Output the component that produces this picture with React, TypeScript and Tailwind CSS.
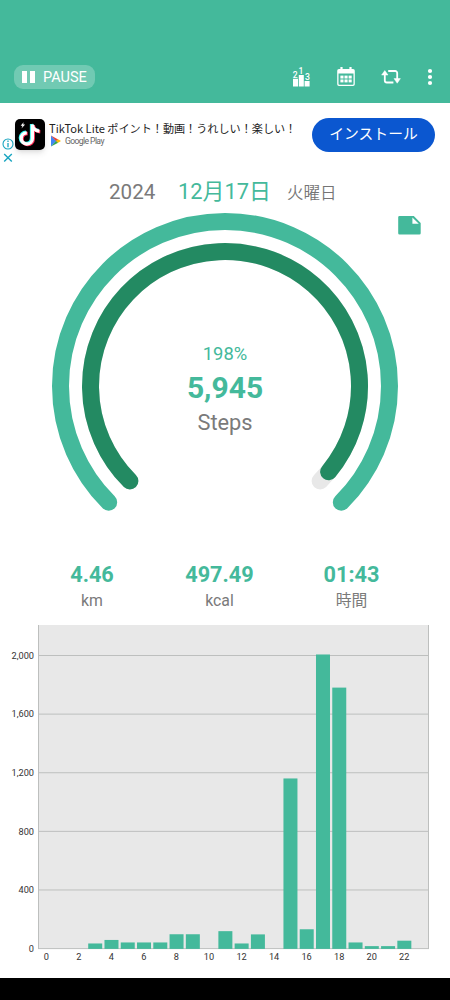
const GREEN = "#44b99b";

const hourlySteps = [
  0, 0, 0, 37, 61, 44, 44, 44, 100, 100, 0, 121, 37, 99, 0, 1163, 134, 2009, 1783, 44, 19, 19, 56, 0,
];

const stats = [
  { value: "4.46", label: "km" },
  { value: "497.49", label: "kcal" },
  { value: "01:43", label: "時間" },
];

const PodiumIcon = () => (
  <svg width="20" height="22" viewBox="0 0 20 22" fill="white" fontSize="8.6" fontWeight="500">
    <rect x="2" y="12.8" width="5" height="7.7" />
    <rect x="7.8" y="9" width="5" height="11.5" />
    <rect x="13.6" y="15" width="5" height="5.5" />
    <text x="4.2" y="11.7" textAnchor="middle">2</text>
    <text x="10" y="7.6" textAnchor="middle">1</text>
    <text x="16.4" y="13.8" textAnchor="middle">3</text>
  </svg>
);

const CalendarIcon = () => (
  <svg width="18" height="20" viewBox="0 0 18 20" fill="white">
    <path
      fillRule="evenodd"
      d="M2 2h1.4V0h2.2v2h6.8V0h2.2v2H16a1.8 1.8 0 0 1 1.8 1.8v13.4A1.8 1.8 0 0 1 16 19H2a1.8 1.8 0 0 1-1.8-1.8V3.8A1.8 1.8 0 0 1 2 2zM1.5 6.4v10.6c0 .4.3.7.7.7h13.6c.4 0 .7-.3.7-.7V6.4z"
    />
    {[8.6, 12.5].map((y) =>
      [3.4, 7.5, 11.6].map((x) => <rect key={`${x}-${y}`} x={x} y={y} width="3.1" height="2.9" />)
    )}
  </svg>
);

const RepeatIcon = () => (
  <svg width="20" height="16" viewBox="0 0 20 16">
    <path d="M3.8 4.5v7a2 2 0 0 0 2 2h6.6M7.2 2h7a2 2 0 0 1 2 2v7" fill="none" stroke="white" strokeWidth="1.8" />
    <path d="M0.6 6 3.8 1.6 7 6zM13 9.6h6.4l-3.2 4.6z" fill="white" stroke="white" strokeWidth="0.5" strokeLinejoin="round" />
  </svg>
);

const MoreIcon = () => (
  <svg width="6" height="18" viewBox="0 0 6 18" fill="white">
    <circle cx="3" cy="3" r="2.1" />
    <circle cx="3" cy="9" r="2.1" />
    <circle cx="3" cy="15" r="2.1" />
  </svg>
);

const TikTokIcon = () => (
  <svg width="30" height="31" viewBox="0 0 30 31" className="rounded-[5px] shadow-md">
    <rect width="30" height="31" fill="black" />
    {[
      { color: "#25f4ee", dx: -0.9, dy: -0.6 },
      { color: "#fe2c55", dx: 0.9, dy: 0.7 },
      { color: "#ffffff", dx: 0, dy: 0 },
    ].map((layer) => (
      <path
        key={layer.color}
        transform={`translate(${layer.dx} ${layer.dy})`}
        d="M17.4 5.6v13.8a5.6 5.6 0 1 1-5.6-5.6M17.4 5.6c.4 3.6 3 6.2 7 6.5"
        fill="none"
        stroke={layer.color}
        strokeWidth="3.3"
      />
    ))}
    <path d="M8.6 3.2 5.6 6.8h1.9l-1 2.8 3.6-4.1H8.2z" fill="white" />
  </svg>
);

const PlayLogo = () => (
  <svg width="10" height="12" viewBox="0 0 10 12">
    <path d="M0 .6v10.8L5.4 6z" fill="#4285f4" />
    <path d="M0 .6 7.2 4.4 5.2 6.2z" fill="#ea4335" />
    <path d="M0 11.4 7.2 7.7 5.2 5.8z" fill="#34a853" />
    <path d="M7 4.3 10 6 7 7.8 5.1 6z" fill="#fbbc04" />
  </svg>
);

const AdMarks = () => (
  <svg width="12" height="26" viewBox="0 0 12 26" fill="none" stroke="#18a5c0" strokeWidth="1.1">
    <circle cx="6" cy="6" r="5" />
    <path d="M6 5v4.2M6 2.6v1.3" strokeWidth="1.3" />
    <path d="M2.2 16l7.6 7.6M9.8 16l-7.6 7.6" strokeWidth="1.4" />
  </svg>
);

const Header = () => (
  <header className="flex h-[102.5px] items-end justify-between bg-[#44b99b] pl-[14px] pr-[17px]">
    <button className="mb-[14px] flex h-6 w-[81px] items-center gap-2 rounded-[9px] bg-[#71cab3] pl-2 text-[14.5px] text-white">
      <span className="flex gap-[3px]">
        <span className="h-3 w-[5px] bg-white" />
        <span className="h-3 w-[5px] bg-white" />
      </span>
      <span className="pt-[3px]">PAUSE</span>
    </button>
    <div className="mb-[14.5px] flex h-[22px] items-center">
      <PodiumIcon />
      <div className="ml-[26px]"><CalendarIcon /></div>
      <div className="ml-[26px]"><RepeatIcon /></div>
      <div className="ml-[26px]"><MoreIcon /></div>
    </div>
  </header>
);

const AdBanner = () => (
  <section className="flex h-[63.5px] items-start pl-[2px] pr-[15px]">
    <div className="mt-[35.5px]"><AdMarks /></div>
    <div className="ml-px mt-[16.5px]"><TikTokIcon /></div>
    <div className="ml-1 mt-[18.5px] whitespace-nowrap">
      <div className="font-['Noto_Sans_CJK_JP',sans-serif] text-[11.12px] leading-[15px] text-[#222]">
        TikTok Lite ポイント！動画！うれしい！楽しい！
      </div>
      <div className="-mt-px flex items-center gap-[4px] pl-[2px] text-[8.6px] leading-[11px] tracking-[-0.6px] text-[#666]">
        <PlayLogo />
        Google Play
      </div>
    </div>
    <button className="ml-auto mt-[15px] h-[34px] w-[123px] shrink-0 rounded-full bg-[#0b57d0] text-[14.8px] text-white">
      インストール
    </button>
  </section>
);

const Gauge = () => (
  <section className="grid h-[343px]">
    <svg width="450" height="343" viewBox="0 205 450 343" className="col-start-1 row-start-1" fill="none" strokeWidth="17" strokeLinecap="round">
      <path d="M108.7 502.3A164.5 164.5 0 1 1 341.3 502.3" stroke={GREEN} />
      <path d="M129.9 481.1A134.5 134.5 0 1 1 320.1 481.1" stroke="#e8e8e8" />
      <path d="M129.9 481.1A134.5 134.5 0 1 1 328.6 471.8" stroke="#238a62" />
      <path d="M399.5 216h14.3l6.9 7v10.2a1.3 1.3 0 0 1-1.3 1.3h-19.9a1.3 1.3 0 0 1-1.3-1.3v-15.9a1.3 1.3 0 0 1 1.3-1.3zM412.4 217.4v6.4h6.4z" fill={GREEN} fillRule="evenodd" strokeWidth="0" />
    </svg>
    <div className="col-start-1 row-start-1 flex flex-col items-center pt-[137px]">
      <div className="text-[18.4px] leading-6 text-[#44b99b]">198%</div>
      <div className="mt-1 text-[30px] font-bold leading-9 text-[#44b99b]">5,945</div>
      <div className="mt-[3px] text-[21.8px] leading-7 text-[#7a7a7a]">Steps</div>
    </div>
  </section>
);

const HourChart = () => (
  <svg width="450" height="358" viewBox="0 620 450 358" className="block" fontSize="9.2" fill="#333">
    <rect x="38.5" y="625" width="390" height="323.5" fill="#e8e8e8" />
    {[0, 400, 800, 1200, 1600, 2000].map((tick) => {
      const y = 948.6 - tick * 0.14655;
      return (
        <g key={tick}>
          <line x1="38" x2="429" y1={y} y2={y} stroke="#bdbfbe" />
          <text x="34" y={y + 3.3} textAnchor="end">{tick.toLocaleString("en-US")}</text>
        </g>
      );
    })}
    <path d="M38.5 625v324M428.5 625v324" stroke="#bdbfbe" />
    {hourlySteps.map((steps, hour) => {
      const height = steps * 0.14655;
      return (
        <g key={hour}>
          {steps > 0 && <rect x={39.4 + hour * 16.27} y={948.9 - height} width="14" height={height} fill={GREEN} />}
          {hour % 2 === 0 && <text x={46.3 + hour * 16.27} y="960" textAnchor="middle">{hour}</text>}
        </g>
      );
    })}
  </svg>
);

export default function App() {
  return (
    <div className="flex h-[1000px] w-[450px] flex-col overflow-hidden bg-white font-[Roboto,'Noto_Sans_CJK_JP',sans-serif]">
      <Header />
      <AdBanner />
      <div className="flex h-[39px] items-baseline pl-[109px] pt-[10px] leading-8">
        <span className="w-[69px] text-[20.6px] text-[#7a7a7a]">2024</span>
        <span className="w-[109px] text-[21.9px] text-[#44b99b]">12月17日</span>
        <span className="text-[16.5px] font-[350] text-[#757575]">火曜日</span>
      </div>
      <Gauge />
      {/* Distance, calories and active time */}
      <section className="flex h-[72px] px-[28px] pt-[14px] text-center">
        {stats.map((stat) => (
          <div key={stat.label} className="w-32 even:w-[127px] last:w-[137px]">
            <div className="text-[21.7px] font-bold leading-[26px] text-[#44b99b]">{stat.value}</div>
            <div className="text-[15.8px] leading-[26px] text-[#7a7a7a] ">{stat.label}</div>
          </div>
        ))}
      </section>
      <HourChart />
      <div className="flex-1 bg-black" />
    </div>
  );
}
